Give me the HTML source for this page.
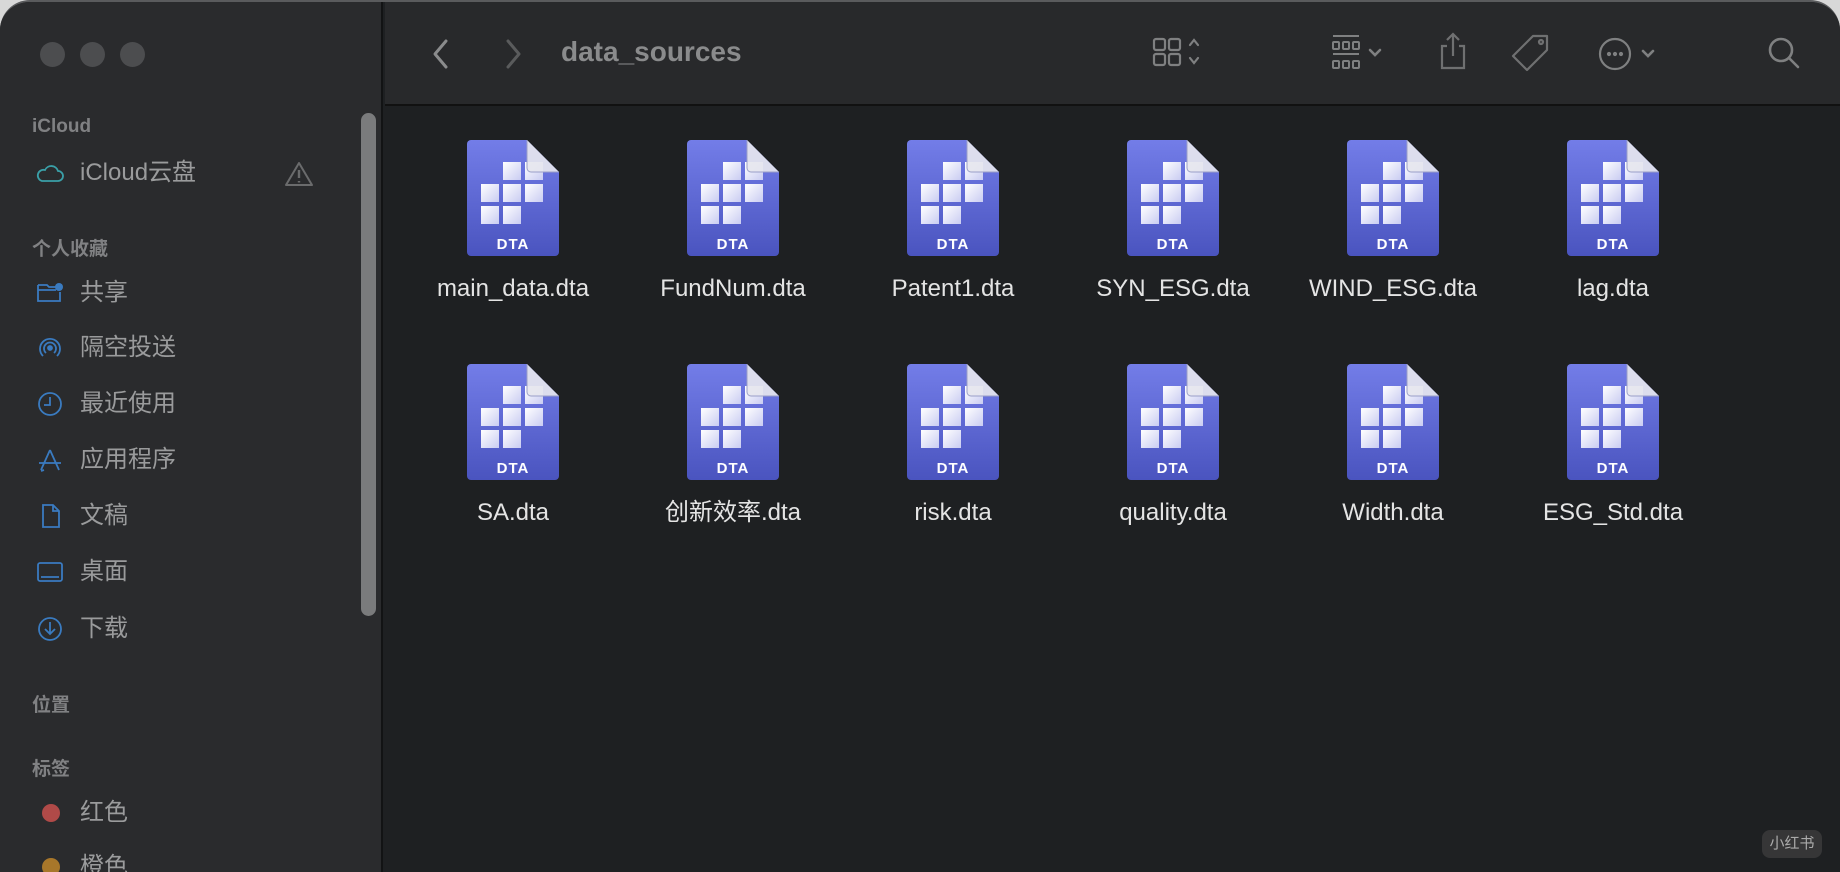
<!DOCTYPE html>
<html><head><meta charset="utf-8">
<style>
*{margin:0;padding:0;box-sizing:border-box}
body{width:1840px;height:872px;background:#d8d8d8;overflow:hidden;font-family:"Liberation Sans","Noto Sans CJK SC",sans-serif}
.win{position:absolute;left:0;top:0;width:1840px;height:872px;border-radius:30px 30px 0 0;overflow:hidden;background:#1e2022;border-top:2px solid #5a5b5d}
.side{position:absolute;left:0;top:0;width:383px;height:872px;background:#2a2b2d;border-right:2px solid #121314}
.tl{position:absolute;top:40px;width:25px;height:25px;border-radius:50%;background:#4c4d4f}
.hdr{position:absolute;left:32px;font-size:19px;font-weight:bold;color:#808183}
.it{position:absolute;left:80px;font-size:24px;color:#9a9b9c;line-height:28px}
.ic{position:absolute;left:36px;width:28px;height:28px}
.sb{position:absolute;left:361px;top:111px;width:15px;height:503px;border-radius:8px;background:#7a7b7c}
.tb{position:absolute;left:385px;top:0;right:0;height:104px;background:#28292b;border-bottom:2px solid #111}
.title{position:absolute;top:34px;font-size:28px;font-weight:bold;color:#8a8b8c}
.f{position:absolute;width:220px;text-align:center}
.f svg{display:block;margin:0 auto}
.f div{margin-top:19px;font-size:24px;line-height:28px;color:#e4e4e4;white-space:nowrap}
</style></head><body>
<div class="win">
<div class="side">
 <div class="tl" style="left:40px"></div><div class="tl" style="left:80px"></div><div class="tl" style="left:120px"></div>
 <div class="hdr" style="top:114px">iCloud</div>
 <svg class="ic" style="top:158px" viewBox="0 0 28 28"><path d="M6 21h16a5 5 0 0 0 0-10 7 7 0 0 0-13-1 5.5 5.5 0 0 0-3 11z" fill="none" stroke="#3aa0a8" stroke-width="1.8"/></svg>
 <div class="it" style="top:157px">iCloud云盘</div>
 <svg style="position:absolute;left:284px;top:158px" width="30" height="28" viewBox="0 0 30 28"><path d="M15 3L28 25H2z" fill="none" stroke="#6a6b6c" stroke-width="2" stroke-linejoin="round"/><path d="M15 10v8M15 21v1.5" stroke="#6a6b6c" stroke-width="2.4"/></svg>
 <div class="hdr" style="top:232px">个人收藏</div>
 <svg class="ic" style="top:277px" viewBox="0 0 28 28"><path d="M2 6h9l2 2h8M2 6v16h22V13M2 11h18" fill="none" stroke="#3a7bc0" stroke-width="1.8"/><circle cx="23" cy="8" r="4" fill="#3a7bc0"/></svg>
 <div class="it" style="top:277px">共享</div>
 <svg class="ic" style="top:332px" viewBox="0 0 28 28" fill="none" stroke="#3a7bc0" stroke-width="1.8"><path d="M7 22a10 10 0 1 1 14 0M10 19a6 6 0 1 1 8 0"/><circle cx="14" cy="14" r="2" fill="#3a7bc0"/></svg>
 <div class="it" style="top:332px">隔空投送</div>
 <svg class="ic" style="top:388px" viewBox="0 0 28 28" fill="none" stroke="#3a7bc0" stroke-width="1.8"><circle cx="14" cy="14" r="11"/><path d="M14 7v8H8"/></svg>
 <div class="it" style="top:388px">最近使用</div>
 <svg class="ic" style="top:444px" viewBox="0 0 28 28" fill="none" stroke="#3a7bc0" stroke-width="1.8"><path d="M14 4L5 24M14 4l9 20M3 17h22M8 24l-3 1"/></svg>
 <div class="it" style="top:444px">应用程序</div>
 <svg class="ic" style="top:500px" viewBox="0 0 28 28" fill="none" stroke="#3a7bc0" stroke-width="1.8"><path d="M7 3h10l6 6v16H7zM17 3v6h6"/></svg>
 <div class="it" style="top:500px">文稿</div>
 <svg class="ic" style="top:556px" viewBox="0 0 28 28" fill="none" stroke="#3a7bc0" stroke-width="1.8"><rect x="2" y="5" width="24" height="18" rx="2"/><path d="M5 19h18"/></svg>
 <div class="it" style="top:556px">桌面</div>
 <svg class="ic" style="top:613px" viewBox="0 0 28 28" fill="none" stroke="#3a7bc0" stroke-width="1.8"><circle cx="14" cy="14" r="11"/><path d="M14 7v12M9 14l5 5 5-5"/></svg>
 <div class="it" style="top:613px">下载</div>
 <div class="hdr" style="top:688px">位置</div>
 <div class="hdr" style="top:752px">标签</div>
 <div style="position:absolute;left:42px;top:802px;width:18px;height:18px;border-radius:50%;background:#b04a48"></div>
 <div class="it" style="top:797px">红色</div>
 <div style="position:absolute;left:42px;top:856px;width:18px;height:18px;border-radius:50%;background:#a8772a"></div>
 <div class="it" style="top:851px">橙色</div>
 <div class="sb"></div>
</div>
<div class="tb">
 <svg style="position:absolute;left:46px;top:36px" width="20" height="32" viewBox="0 0 20 32"><path d="M15 3L4 16l11 13" fill="none" stroke="#8a8b8c" stroke-width="3" stroke-linecap="round" stroke-linejoin="round"/></svg>
 <svg style="position:absolute;left:118px;top:36px" width="20" height="32" viewBox="0 0 20 32"><path d="M5 3l11 13L5 29" fill="none" stroke="#5a5b5c" stroke-width="3" stroke-linecap="round" stroke-linejoin="round"/></svg>
 <div class="title" style="left:176px">data_sources</div>
 <svg style="position:absolute;left:760px;top:32px" width="60" height="40" viewBox="0 0 60 40" fill="none" stroke="#7f8081" stroke-width="2.2"><rect x="9" y="5" width="11" height="11" rx="2"/><rect x="24" y="5" width="11" height="11" rx="2"/><rect x="9" y="20" width="11" height="11" rx="2"/><rect x="24" y="20" width="11" height="11" rx="2"/><path d="M45 11l4-5 4 5M45 24l4 5 4-5" stroke-linecap="round"/></svg>
 <svg style="position:absolute;left:940px;top:30px" width="70" height="46" viewBox="0 0 70 46" fill="none" stroke="#7f8081" stroke-width="2"><path d="M8 4h26M8 22h26"/><rect x="8" y="10" width="6" height="7" rx="1"/><rect x="18" y="10" width="6" height="7" rx="1"/><rect x="28" y="10" width="6" height="7" rx="1"/><rect x="8" y="29" width="6" height="7" rx="1"/><rect x="18" y="29" width="6" height="7" rx="1"/><rect x="28" y="29" width="6" height="7" rx="1"/><path d="M45 18l5 5 5-5" stroke-width="2.6" stroke-linecap="round"/></svg>
 <svg style="position:absolute;left:1050px;top:28px" width="36" height="44" viewBox="0 0 36 44" fill="none" stroke="#6f7071" stroke-width="2.2"><path d="M12 16H7v22h22V16h-5M18 4v22M12 10l6-6 6 6"/></svg>
 <svg style="position:absolute;left:1124px;top:30px" width="44" height="44" viewBox="0 0 44 44" fill="none" stroke="#6f7071" stroke-width="2.2"><path d="M24 4h14v14L18 38 4 24z" stroke-linejoin="round"/><circle cx="32" cy="10" r="2"/></svg>
 <svg style="position:absolute;left:1210px;top:32px" width="70" height="40" viewBox="0 0 70 40" fill="none" stroke="#7f8081" stroke-width="2.2"><circle cx="20" cy="20" r="15"/><circle cx="14" cy="20" r="1" fill="#7f8081"/><circle cx="20" cy="20" r="1" fill="#7f8081"/><circle cx="26" cy="20" r="1" fill="#7f8081"/><path d="M48 17l5 5 5-5" stroke-width="2.6" stroke-linecap="round"/></svg>
 <svg style="position:absolute;left:1380px;top:32px" width="40" height="40" viewBox="0 0 40 40" fill="none" stroke="#7f8081" stroke-width="2.6"><circle cx="16" cy="16" r="11"/><path d="M24 24l9 9" stroke-linecap="round"/></svg>
</div>
<svg width="0" height="0" style="position:absolute"><defs>
 <linearGradient id="bg" x1="0" y1="0" x2="0" y2="1"><stop offset="0" stop-color="#737de8"/><stop offset="1" stop-color="#4a54bf"/></linearGradient>
 <linearGradient id="sq" x1="0" y1="0" x2="1" y2="1"><stop offset="0" stop-color="#ffffff"/><stop offset="1" stop-color="#c9ccf2"/></linearGradient>
 <symbol id="doc" viewBox="0 0 92 116">
  <path d="M4 0h56l32 32v80a4 4 0 0 1-4 4H4a4 4 0 0 1-4-4V4a4 4 0 0 1 4-4z" fill="url(#bg)"/>
  <rect x="36" y="22" width="18" height="18" fill="url(#sq)"/><rect x="58" y="22" width="18" height="18" fill="url(#sq)"/>
  <rect x="14" y="44" width="18" height="18" fill="url(#sq)"/><rect x="36" y="44" width="18" height="18" fill="url(#sq)"/><rect x="58" y="44" width="18" height="18" fill="url(#sq)"/>
  <rect x="14" y="66" width="18" height="18" fill="url(#sq)"/><rect x="36" y="66" width="18" height="18" fill="url(#sq)"/>
  <path d="M60 0l32 32H64a4 4 0 0 1-4-4z" fill="#e6e6ee" fill-opacity="0.92"/><path d="M60 0v28a4 4 0 0 0 4 4h28" fill="none" stroke="#9a9fc8" stroke-width="1"/>
 </symbol>
</defs></svg>
<div id="grid"></div>
<div style="position:absolute;left:1762px;top:828px;width:60px;height:28px;border-radius:8px;background:rgba(70,70,70,.6);color:#aaa;font-size:15px;text-align:center;line-height:28px">小红书</div>
</div>
<script>
var names=["main_data.dta","FundNum.dta","Patent1.dta","SYN_ESG.dta","WIND_ESG.dta","lag.dta","SA.dta","创新效率.dta","risk.dta","quality.dta","Width.dta","ESG_Std.dta"];
var h="";
names.forEach(function(n,i){var c=i%6,r=Math.floor(i/6);
h+='<div class="f" style="left:'+(403+c*220)+'px;top:'+(138+r*224)+'px"><svg width="92" height="116" viewBox="0 0 92 116"><use href="#doc"/><text x="46" y="109" text-anchor="middle" font-family="Liberation Sans" font-weight="bold" font-size="15" fill="#fff" letter-spacing="1">DTA</text></svg><div>'+n+'</div></div>';});
document.getElementById("grid").innerHTML=h;
</script>
</body></html>
